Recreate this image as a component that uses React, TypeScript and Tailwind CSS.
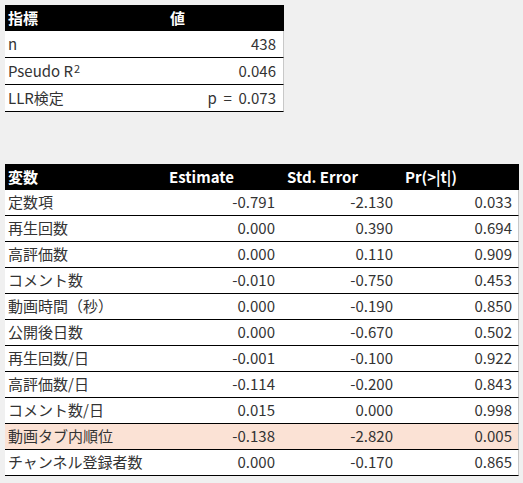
const font = { fontFamily: '"Noto Sans CJK JP", "Noto Sans", sans-serif' }

const summary = [
  { label: 'n', value: '438' },
  { label: 'Pseudo R', sup: '2', value: '0.046' },
  { label: 'LLR検定', value: 'p = 0.073' },
]

const coefs = [
  ['定数項', '-0.791', '-2.130', '0.033'],
  ['再生回数', '0.000', '0.390', '0.694'],
  ['高評価数', '0.000', '0.110', '0.909'],
  ['コメント数', '-0.010', '-0.750', '0.453'],
  ['動画時間（秒）', '0.000', '-0.190', '0.850'],
  ['公開後日数', '0.000', '-0.670', '0.502'],
  ['再生回数/日', '-0.001', '-0.100', '0.922'],
  ['高評価数/日', '-0.114', '-0.200', '0.843'],
  ['コメント数/日', '0.015', '0.000', '0.998'],
  ['動画タブ内順位', '-0.138', '-2.820', '0.005'],
  ['チャンネル登録者数', '0.000', '-0.170', '0.865'],
]

export default function App() {
  return (
    <div className="h-[483px] w-[523px] bg-[#f0f0f0] pl-[5px] pt-[5px] text-[15px] text-[#333333]" style={font}>
      {/* 統計量 */}
      <div className="w-[279px]">
        <div className="flex h-[26px] items-center bg-black font-bold text-white">
          <div className="w-[158px] pl-[3px]">指標</div>
          <div className="pl-[7px]">値</div>
        </div>
        {summary.map((r) => (
          <div
            key={r.label}
            className="flex h-[27px] items-center justify-between border-b border-r border-b-black border-r-[#c8c8c8] bg-white pl-[3px] pr-[7px]"
          >
            <span>
              {r.label}
              {r.sup && <sup className="relative -top-[4px] ml-[1px] text-[11px]">{r.sup}</sup>}
            </span>
            <span className="whitespace-pre">{r.value.replace(' = ', '  =  ')}</span>
          </div>
        ))}
      </div>

      {/* 回帰係数 */}
      <div className="mt-[52px] w-[514px]">
        <div className="grid h-[26px] grid-cols-[158px_118px_118px_120px] items-center bg-black font-bold text-white">
          <div className="pl-[3px]">変数</div>
          <div className="pl-[6px]">Estimate</div>
          <div className="pl-[6px]">Std. Error</div>
          <div className="pl-[6px]">Pr(&gt;|t|)</div>
        </div>
        {coefs.map((r) => (
          <div
            key={r[0]}
            className={`grid h-[26px] grid-cols-[158px_118px_118px_120px] items-center border-b border-r border-b-black border-r-[#c8c8c8] ${
              r[0] === '動画タブ内順位' ? 'bg-[#fbe2d5]' : 'bg-white'
            }`}
          >
            <div className="pl-[3px]">{r[0]}</div>
            <div className="pr-[6px] text-right">{r[1]}</div>
            <div className="pr-[6px] text-right">{r[2]}</div>
            <div className="pr-[7px] text-right">{r[3]}</div>
          </div>
        ))}
      </div>
    </div>
  )
}
